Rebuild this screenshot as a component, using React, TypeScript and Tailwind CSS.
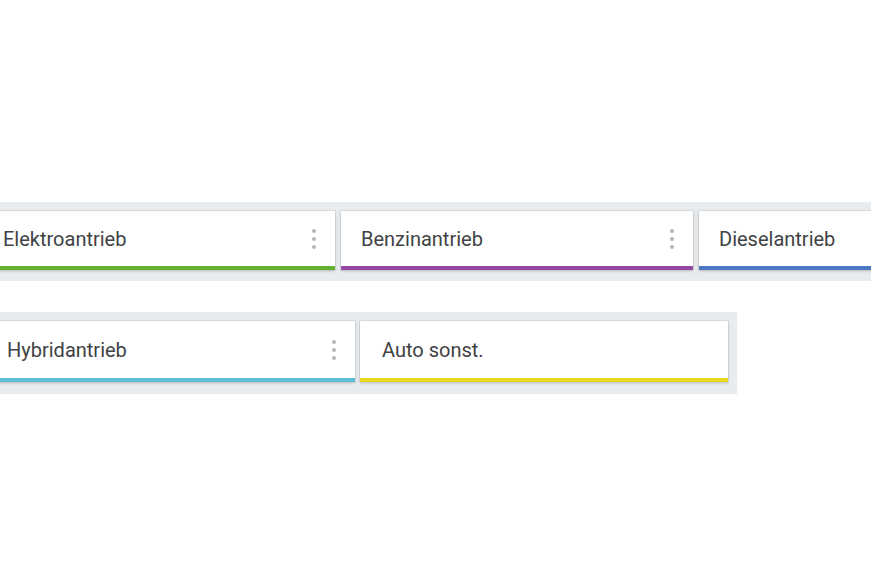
import React from "react";

type Card = { label: string; color: string; width: number; menu: boolean; pl: number };

function Dots() {
  return (
    <div className="flex flex-col items-center gap-[4px] mr-[19px]">
      <span className="block w-[4px] h-[4px] rounded-full bg-[#b4b7ba]" />
      <span className="block w-[4px] h-[4px] rounded-full bg-[#b4b7ba]" />
      <span className="block w-[4px] h-[4px] rounded-full bg-[#b4b7ba]" />
    </div>
  );
}

function Tile({ c, h }: { c: Card; h: number }) {
  return (
    <div
      className="shrink-0 bg-white flex flex-col shadow-[0_0_0_1px_rgba(0,0,0,0.05),0_1px_3px_rgba(0,0,0,0.18)]"
      style={{ width: c.width, height: h }}
    >
      <div className="flex-1 flex items-center justify-between">
        <span
          className="text-[20px] leading-none text-[#404244]"
          style={{ paddingLeft: c.pl }}
        >
          {c.label}
        </span>
        {c.menu ? <Dots /> : null}
      </div>
      <div className="h-[4px] shrink-0" style={{ backgroundColor: c.color }} />
    </div>
  );
}

export default function App() {
  const row1: Card[] = [
    { label: "Elektroantrieb", color: "#62b22f", width: 352, menu: true, pl: 20 },
    { label: "Benzinantrieb", color: "#9648a2", width: 352, menu: true, pl: 20 },
    { label: "Dieselantrieb", color: "#4d77c2", width: 352, menu: true, pl: 20 },
  ];
  const row2: Card[] = [
    { label: "Hybridantrieb", color: "#5bbfd5", width: 368, menu: true, pl: 20 },
    { label: "Auto sonst.", color: "#ead81f", width: 368, menu: false, pl: 22 },
  ];
  return (
    <div
      className="w-[871px] h-[579px] overflow-hidden bg-white relative"
      style={{ fontFamily: "Roboto, 'Liberation Sans', sans-serif" }}
    >
      <div className="pt-[202px]">
        <div className="ml-[-26px] w-max flex gap-[6px] bg-[#e9ecef] pt-[9px] pb-[11px] px-[9px]">
          {row1.map((c) => (
            <Tile key={c.label} c={c} h={59} />
          ))}
        </div>
        <div className="mt-[31px] ml-[-22px] w-max flex gap-[5px] bg-[#e9ecef] pt-[9px] pb-[12px] px-[9px]">
          {row2.map((c) => (
            <Tile key={c.label} c={c} h={61} />
          ))}
        </div>
      </div>
    </div>
  );
}
